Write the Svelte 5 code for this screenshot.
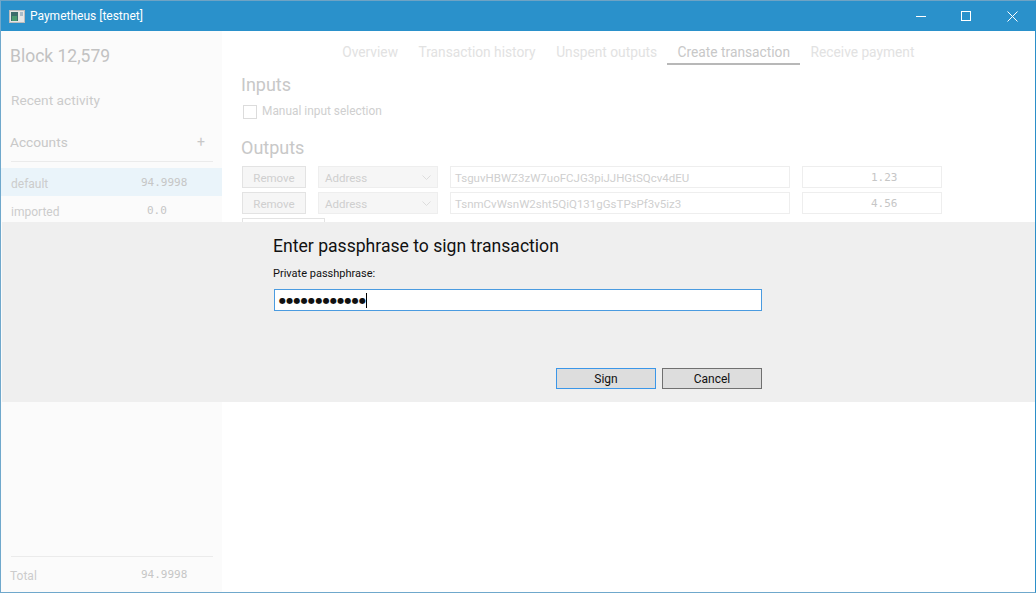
<script>
  const tabs = ['Overview', 'Transaction history', 'Unspent outputs', 'Create transaction', 'Receive payment'];
  const outputs = [
    { addr: 'TsguvHBWZ3zW7uoFCJG3piJJHGtSQcv4dEU', amt: '1.23' },
    { addr: 'TsnmCvWsnW2sht5QiQ131gGsTPsPf3v5iz3', amt: '4.56' }
  ];
</script>

<div class="window">
  <header class="titlebar">
    <svg class="appicon" width="16" height="13" viewBox="0 0 16 13">
      <rect x="0.5" y="0.5" width="15" height="12" fill="#e6e6e6" stroke="#bdbdbd"/>
      <rect x="2" y="2" width="7" height="9" fill="#3c6c6c"/>
      <rect x="3" y="6" width="5" height="5" fill="#4a9a72"/>
      <rect x="11" y="2" width="3" height="4" fill="#a9bcc8"/>
    </svg>
    <span class="title">Paymetheus [testnet]</span>
    <div class="controls">
      <svg width="11" height="11" viewBox="0 0 11 11"><path d="M1 5.5H11" stroke="#fff"/></svg>
      <svg width="11" height="11" viewBox="0 0 11 11"><rect x="0.5" y="0.5" width="9" height="9" fill="none" stroke="#fff"/></svg>
      <svg width="11" height="11" viewBox="0 0 11 11"><path d="M0.5 0.5L10.5 10.5M10.5 0.5L0.5 10.5" stroke="#fff"/></svg>
    </div>
  </header>

  <div class="body">
    <aside class="sidebar">
      <div class="block">Block 12,579</div>
      <div class="recent">Recent activity</div>
      <div class="acct-head"><span>Accounts</span><span class="plus">+</span></div>
      <div class="rule"></div>
      <div class="acct selected"><span class="name">default</span><span class="mono">94.9998</span></div>
      <div class="acct"><span class="name">imported</span><span class="mono zero">0.0</span></div>
      <div class="grow"></div>
      <div class="rule"></div>
      <div class="total"><span class="name">Total</span><span class="mono">94.9998</span></div>
    </aside>

    <main class="main">
      <nav class="tabs">
        {#each tabs as t, i}
          <span class="tab" class:active={i === 3}>{t}</span>
        {/each}
      </nav>
      <h2>Inputs</h2>
      <label class="check"><span class="box"></span>Manual input selection</label>
      <h2 class="outputs">Outputs</h2>
      {#each outputs as o}
        <div class="row">
          <span class="btn">Remove</span>
          <span class="select">Address
            <svg width="9" height="6" viewBox="0 0 9 6"><path d="M0.5 0.5L4.5 4.5L8.5 0.5" fill="none" stroke="#ddd"/></svg>
          </span>
          <span class="field">{o.addr}</span>
          <span class="amount mono">{o.amt}</span>
        </div>
      {/each}
      <span class="btn add"></span>
    </main>
  </div>

  <section class="dialog">
    <div class="dialog-inner">
      <div class="prompt">Enter passphrase to sign transaction</div>
      <div class="lab">Private passhphrase:</div>
      <div class="input"><span class="dots">●●●●●●●●●●●●</span><span class="caret"></span></div>
      <div class="actions">
        <span class="dbtn focus">Sign</span>
        <span class="dbtn">Cancel</span>
      </div>
    </div>
  </section>
</div>

<style>
  :global(body) { margin: 0; background: #fff; }
  .window {
    position: relative;
    box-sizing: border-box;
    width: 1036px;
    height: 593px;
    display: flex;
    flex-direction: column;
    border: 1px solid #2b8fc9;
    border-top-color: #6fa3c4;
    border-left-color: #6fa8cc;
    border-bottom-color: #6fa8cc;
    font-family: Roboto, "Noto Sans", sans-serif;
    overflow: hidden;
    background: #fff;
  }
  .titlebar {
    height: 30px;
    flex: none;
    background: #2a91cb;
    color: #fff;
    display: flex;
    align-items: center;
    padding-left: 8px;
    font-size: 12px;
  }
  .appicon { margin-right: 5px; }
  .controls { margin-left: auto; display: flex; gap: 35px; margin-right: 17px; }
  .body { flex: 1; display: flex; min-height: 0; }
  .sidebar {
    width: 221px;
    flex: none;
    background: #fbfbfb;
    display: flex;
    flex-direction: column;
    color: #c8c8c8;
    font-size: 12px;
  }
  .block { font-size: 17.5px; padding: 14px 0 0 9px; line-height: 23px; color: #c2c2c2; }
  .recent { font-size: 13.7px; padding: 23px 0 0 10px; line-height: 18px; color: #cbcbcb; }
  .acct-head { display: flex; justify-content: space-between; font-size: 13.7px; line-height: 18px; padding: 24px 17px 0 9px; color: #c8c8c8; }
  .plus { font-size: 14px; }
  .rule { height: 1px; background: #ebebeb; margin: 10px 9px 0 10px; flex: none; }
  .acct { display: flex; height: 28px; align-items: center; padding-left: 10px; font-size: 12px; color: #cccccc; }
  .acct .name { width: 130px; padding-top: 3px; }
  .acct.selected { background: #eaf4fa; margin-top: 6px; }
  .mono { font-family: "DejaVu Sans Mono", monospace; font-size: 11px; color: #c6c6c6; }
  .zero { margin-left: 6px; }
  .grow { flex: 1; }
  .total { display: flex; padding: 9px 0 0 9px; line-height: 18px; height: 26px; box-sizing: content-box; color: #cccccc; }
  .total .name { width: 131px; padding-top: 1px; }
  .main { flex: 1; padding: 0 0 0 18px; color: #cfcfcf; font-size: 12px; position: relative; }
  .tabs { display: flex; height: 32px; margin-left: 92px; padding-top: 10px; box-sizing: content-box; font-size: 13.75px; color: #e2e2e2; }
  .tab { line-height: 22px; height: 22px; padding: 0 10.25px; }
  .tab.active { color: #c8c8c8; border-bottom: 2px solid #b8b8b8; }
  h2 { font-weight: 400; font-size: 18px; line-height: 23px; margin: 0; padding: 0 0 0 1px; color: #c8c8c8; }
  .check { display: flex; align-items: center; gap: 5px; padding: 7px 0 0 3px; color: #cfcfcf; line-height: 17px; font-size: 11.9px; }
  .box { width: 12px; height: 12px; border: 1px solid #dcdcdc; display: block; }
  .outputs { margin-top: 16px; }
  .row { display: flex; height: 22px; margin: 7px 0 0 2px; align-items: stretch; font-size: 11.5px; }
  .row + .row { margin-top: 4px; }
  .row > span { padding-top: 1px; }
  .btn { box-sizing: border-box; width: 64px; border: 1px solid #e3e3e3; background: #f6f6f6; display: flex; align-items: center; justify-content: center; color: #cfcfcf; }
  .select { box-sizing: border-box; width: 120px; margin-left: 12px; border: 1px solid #eeeeee; background: #f6f6f6; display: flex; align-items: center; justify-content: space-between; padding: 0 6px; color: #cfcfcf; }
  .field { box-sizing: border-box; width: 340px; margin-left: 12px; border: 1px solid #eeeeee; display: flex; align-items: center; padding-left: 4px; color: #cfcfcf; }
  .amount { box-sizing: border-box; width: 140px; margin-left: 12px; border: 1px solid #eeeeee; display: flex; align-items: center; padding-left: 68px; font-size: 11px; }
  .add { display: block; margin: 4px 0 0 2px; width: 83px; height: 23px; background: #fff; }
  .dialog {
    position: absolute;
    left: 1px; right: 0; top: 221px;
    height: 180px;
    background: #efefef;
    color: #111;
  }
  .dialog-inner { width: 488px; margin-left: 272px; display: flex; flex-direction: column; }
  .prompt { font-size: 17.6px; line-height: 22px; margin: 13px 0 0 -1px; }
  .lab { font-size: 11px; line-height: 16px; margin: 9px 0 0 -1px; }
  .input { box-sizing: border-box; height: 22px; margin-top: 7px; border: 1px solid #4a9be0; background: #fff; display: flex; align-items: center; padding-left: 4px; }
  .dots { font-size: 8px; letter-spacing: 0.3px; font-family: "DejaVu Sans", sans-serif; }
  .caret { width: 1px; height: 15px; background: #000; }
  .actions { display: flex; justify-content: flex-end; gap: 6px; margin-top: 57px; }
  .dbtn { box-sizing: border-box; width: 100px; height: 21px; padding-top: 1px; background: #dddddd; border: 1px solid #707070; display: flex; align-items: center; justify-content: center; font-size: 12px; }
  .dbtn.focus { border-color: #3b96e8; }
</style>
